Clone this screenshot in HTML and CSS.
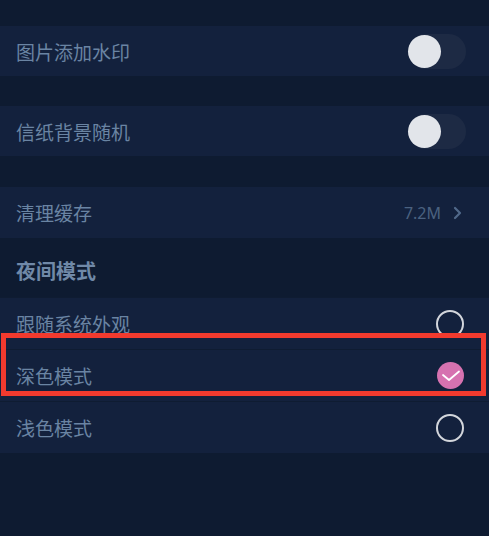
FILE: index.html
```html
<!DOCTYPE html>
<html lang="zh-CN">
<head>
    <meta charset="UTF-8">
    <meta name="viewport" content="width=device-width, initial-scale=1.0">
    <title>设置</title>
    <link rel="stylesheet" href="styles.css">
</head>
<body>
    <div class="settings">
        <div class="row first">
            <span class="label">图片添加水印</span>
            <span class="switch"><span class="knob"></span></span>
        </div>

        <div class="row spaced">
            <span class="label">信纸背景随机</span>
            <span class="switch"><span class="knob"></span></span>
        </div>

        <div class="row spaced cache">
            <span class="label">清理缓存</span>
            <span class="extra">
                <span class="size">7.2M</span>
                <svg class="chevron" width="10" height="14" viewBox="0 0 10 14">
                    <path d="M2 2 L7 7 L2 12" fill="none" stroke="#51698a" stroke-width="2.2" stroke-linecap="round" stroke-linejoin="round"/>
                </svg>
            </span>
        </div>

        <div class="section-title">夜间模式</div>

        <div class="group">
            <div class="row radio-row">
                <span class="label">跟随系统外观</span>
                <span class="radio"></span>
            </div>
            <div class="row radio-row">
                <span class="label">深色模式</span>
                <span class="radio checked">
                    <svg width="20" height="14" viewBox="0 0 20 14">
                        <path d="M2 6 L8 11 L18 2.5" fill="none" stroke="#ffffff" stroke-width="1.8" stroke-linecap="round" stroke-linejoin="round"/>
                    </svg>
                </span>
            </div>
            <div class="row radio-row">
                <span class="label">浅色模式</span>
                <span class="radio"></span>
            </div>
            <div class="highlight"></div>
        </div>
    </div>
</body>
</html>
```

FILE: styles.css
```css
* {
    margin: 0;
    padding: 0;
    box-sizing: border-box;
}

body {
    font-family: "Noto Sans CJK SC", "Noto Sans", sans-serif;
    background-color: #0e1b31;
    height: 100vh;
}

.settings {
    padding-top: 26px;
}

.row {
    display: flex;
    justify-content: space-between;
    align-items: center;
    height: 50px;
    padding: 0 24px 0 16px;
    background-color: #13213d;
}

.row.spaced {
    margin-top: 30px;
}

.row.cache {
    margin-top: 31px;
    height: 51px;
}

.label {
    font-size: 19px;
    color: #6a84a3;
}

.switch {
    width: 58px;
    height: 35px;
    border-radius: 18px;
    background-color: #1d2a44;
    display: flex;
    align-items: center;
    margin-right: -1px;
}

.knob {
    width: 33px;
    height: 33px;
    border-radius: 50%;
    background-color: #e2e5ea;
}

.extra {
    display: flex;
    align-items: center;
    gap: 12px;
    margin-right: 2px;
}

.size {
    font-family: "Noto Sans", sans-serif;
    font-size: 16px;
    color: #4b6180;
}

.section-title {
    height: 59px;
    display: flex;
    align-items: center;
    padding-left: 16px;
    padding-top: 6px;
    font-size: 20px;
    font-weight: bold;
    color: #7089a8;
}

.group {
    position: relative;
}

.radio-row {
    height: 52px;
    border-top: 1px solid #0f1c32;
}

.radio-row:last-of-type {
    border-bottom: 1px solid #0f1c32;
}

.radio {
    width: 28px;
    height: 28px;
    border-radius: 50%;
    border: 2px solid #d3d6dc;
    margin-right: 1px;
    display: flex;
    align-items: center;
    justify-content: center;
}

.radio.checked {
    border: none;
    background-color: #d672b0;
    width: 27px;
    height: 27px;
}

.highlight {
    position: absolute;
    left: 1px;
    right: 3px;
    top: 36px;
    height: 63px;
    border: 5px solid #f23a2e;
}
```
